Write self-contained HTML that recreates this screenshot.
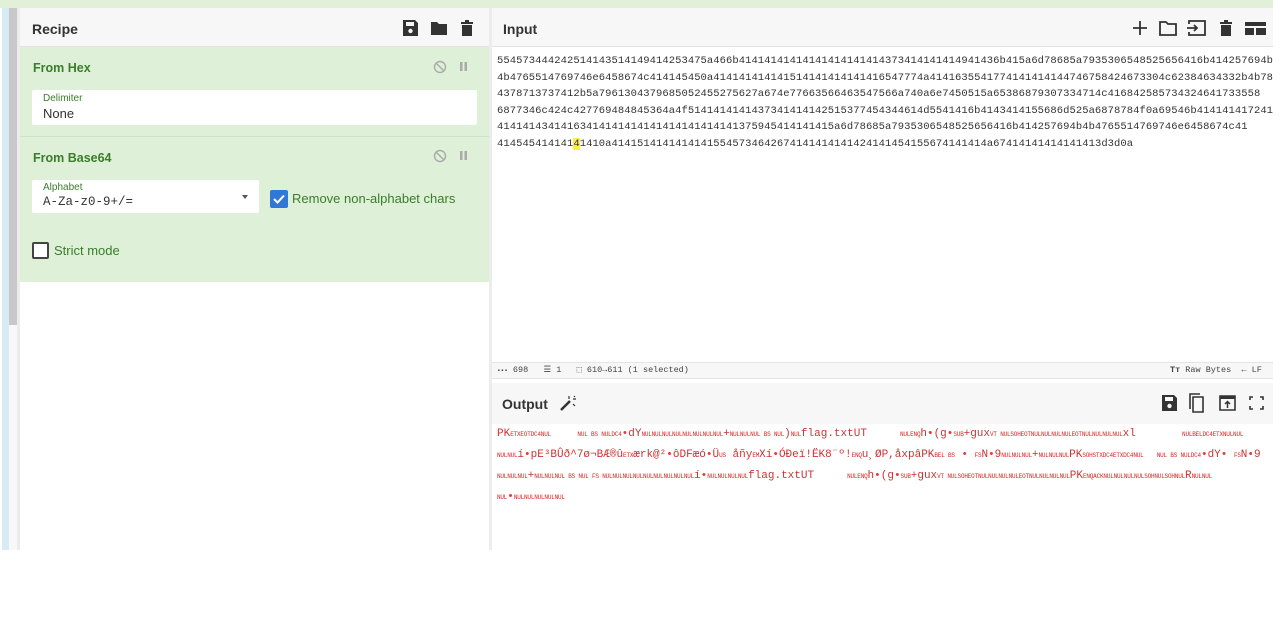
<!DOCTYPE html>
<html><head><meta charset="utf-8"><style>
*{box-sizing:border-box;margin:0;padding:0}
body{width:1280px;height:625px;background:#fff;font-family:"Liberation Sans",sans-serif;position:relative;overflow:hidden}
.abs{position:absolute}
.mono{font-family:"Liberation Mono",monospace}
.hdr{font-weight:bold;font-size:14px;color:#333}
.opt{color:#3a7d2a;font-weight:bold;font-size:12.5px}
.ctl{color:#e33;font-size:6px;font-weight:bold;letter-spacing:-0.2px}
.out{font-family:"Liberation Mono",monospace;font-size:11px;color:#c33;line-height:21px;white-space:nowrap}
.out b{font-weight:normal;color:#d22}
.dot{color:#e33}
</style></head><body>
<div class="abs" style="left:0;top:0;width:1273px;height:8px;background:#e2f0da"></div>
<div class="abs" style="left:2px;top:8px;width:7px;height:542px;background:#d7ebf5"></div>
<div class="abs" style="left:9px;top:8px;width:8px;height:542px;background:#f8f8f8"></div>
<div class="abs" style="left:9px;top:8px;width:8px;height:317px;background:#c8c8c8"></div>
<div class="abs" style="left:17px;top:8px;width:3px;height:542px;background:#ececec"></div>

<div class="abs" style="left:20px;top:8px;width:469px;height:542px;background:#fff"></div>
<div class="abs" style="left:20px;top:8px;width:469px;height:39px;background:#f7f7f7;border-bottom:1px solid #e2e2e2"></div>
<div class="abs hdr" style="left:32px;top:21px">Recipe</div>
<svg class="abs" style="left:402px;top:19px" width="76" height="18" viewBox="0 0 76 18" fill="#333">
<path d="M1 1h12l3 3v13H1z M4 3v4h8V3z" fill-rule="evenodd"/><circle cx="8.5" cy="12" r="2.2" fill="#f7f7f7"/>
<path d="M29 3h6l2 2h8v11H29z"/>
<path d="M59 3h12v2H59z M63 1h4v2h-4z M60 6h10v11H60z"/>
</svg>
<div class="abs" style="left:20px;top:47px;width:469px;height:90px;background:#dff0d8;border-bottom:1px solid #cfe3c6"></div>
<div class="abs opt" style="left:33px;top:61px">From Hex</div>
<svg class="abs" style="left:433px;top:60px" width="40" height="14"><circle cx="7" cy="7" r="5.5" fill="none" stroke="#aaa" stroke-width="1.4"/><path d="M3 3l8 8" stroke="#aaa" stroke-width="1.4"/><rect x="27" y="2" width="2.5" height="9" fill="#aaa"/><rect x="31.5" y="2" width="2.5" height="9" fill="#aaa"/></svg>
<div class="abs" style="left:32px;top:90px;width:445px;height:35px;background:#fff;border-radius:2px"></div>
<div class="abs" style="left:43px;top:93px;font-size:10px;color:#3a7d2a">Delimiter</div>
<div class="abs" style="left:43px;top:106px;font-size:13px;color:#333">None</div>
<div class="abs" style="left:20px;top:137px;width:469px;height:145px;background:#dff0d8"></div>
<div class="abs opt" style="left:33px;top:151px">From Base64</div>
<svg class="abs" style="left:433px;top:149px" width="40" height="14"><circle cx="7" cy="7" r="5.5" fill="none" stroke="#aaa" stroke-width="1.4"/><path d="M3 3l8 8" stroke="#aaa" stroke-width="1.4"/><rect x="27" y="2" width="2.5" height="9" fill="#aaa"/><rect x="31.5" y="2" width="2.5" height="9" fill="#aaa"/></svg>
<div class="abs" style="left:32px;top:180px;width:227px;height:33px;background:#fff;border-radius:2px"></div>
<div class="abs" style="left:43px;top:182px;font-size:10px;color:#3a7d2a">Alphabet</div>
<div class="abs mono" style="left:43px;top:195px;font-size:12.5px;color:#333">A-Za-z0-9+/=</div>
<div class="abs" style="left:242px;top:195px;border-left:3.5px solid transparent;border-right:3.5px solid transparent;border-top:4px solid #555"></div>
<div class="abs" style="left:270px;top:190px;width:18px;height:18px;background:#2f78d6;border-radius:2px"></div>
<svg class="abs" style="left:270px;top:190px" width="18" height="18"><path d="M4 9l3.5 3.5L14 5.5" fill="none" stroke="#fff" stroke-width="2"/></svg>
<div class="abs" style="left:292px;top:191px;font-size:13px;color:#3a7d2a">Remove non-alphabet chars</div>
<div class="abs" style="left:32px;top:242px;width:17px;height:17px;border:2px solid #444;border-radius:2px;background:#fff"></div>
<div class="abs" style="left:54px;top:243px;font-size:13px;color:#3a7d2a">Strict mode</div>

<div class="abs" style="left:489px;top:8px;width:3px;height:542px;background:#ececec"></div>

<div class="abs" style="left:492px;top:8px;width:781px;height:39px;background:#f7f7f7;border-bottom:1px solid #e2e2e2"></div>
<div class="abs hdr" style="left:503px;top:21px">Input</div>
<svg class="abs" style="left:1132px;top:19px" width="136" height="18" viewBox="0 0 136 18" fill="#333">
<path d="M8 2v14M1 9h14" stroke="#333" stroke-width="1.8"/>
<path d="M28 3h6l2 2h8v11H28z" fill="none" stroke="#333" stroke-width="1.8"/>
<path d="M57 5V2h16v14H57v-3" fill="none" stroke="#333" stroke-width="1.8"/><path d="M55 9h10M62 6l3 3-3 3" fill="none" stroke="#333" stroke-width="1.8"/>
<path d="M88 3h12v2H88z M92 1h4v2h-4z M89 6h10v11H89z"/>
<path d="M113 3h21v4h-21z M113 9h9v7h-9z M124 9h10v7h-10z"/>
</svg>
<div class="abs mono" style="left:497px;top:53px;font-size:10.5px;color:#333;line-height:16.5px;letter-spacing:0.06px;white-space:pre">554573444242514143514149414253475a466b41414141414141414141414373414141414941436b415a6d78685a7935306548525656416b414257694b
4b4765514769746e6458674c414145450a414141414141514141414141416547774a4141635541774141414144746758424673304c62384634332b4b78
4378713737412b5a7961304379685052455275627a674e77663566463547566a740a6e7450515a65386879307334714c416842585734324641733558
6877346c424c427769484845364a4f5141414141437341414142515377454344614d5541416b4143414155686d525a6878784f0a69546b414141417241
41414143414163414141414141414141414141375945414141415a6d78685a7935306548525656416b414257694b4b4765514769746e6458674c41
414545414141<span style="background:#ffee44">4</span>1410a41415141414141415545734642674141414141424141454155674141414a67414141414141413d3d0a</div>

<div class="abs" style="left:492px;top:362px;width:781px;height:17px;background:#f7f7f7;border-top:1px solid #e5e5e5;border-bottom:1px solid #e5e5e5"></div>
<div class="abs mono" style="left:497px;top:365px;font-size:8.5px;color:#444;white-space:pre"><b style="font-size:6px">▪▪▪</b> 698   ☰ 1   ⬚ 610→611 (1 selected)</div>
<div class="abs mono" style="left:1170px;top:365px;font-size:8.5px;color:#444;white-space:pre"><b>Tт</b> Raw Bytes  ← LF</div>

<div class="abs" style="left:492px;top:383px;width:781px;height:41px;background:#f7f7f7"></div>
<div class="abs hdr" style="left:502px;top:396px">Output</div>
<svg class="abs" style="left:559px;top:395px" width="18" height="17"><path d="M2 15L11 6" stroke="#333" stroke-width="2.5"/><path d="M10 1v3M14 4h3M14 9l2 2M15 1l1 1" stroke="#333" stroke-width="1.2"/></svg>
<svg class="abs" style="left:1160px;top:393px" width="106" height="20" viewBox="0 0 106 20" fill="#333">
<path d="M2 2h12l3 3v13H2z M5 4v4h8V4z" fill-rule="evenodd"/><circle cx="9.5" cy="13" r="2.2" fill="#f7f7f7"/>
<path d="M33 4h10v15H33z" fill="none" stroke="#333" stroke-width="1.6"/><path d="M30 16V1h10" fill="none" stroke="#333" stroke-width="1.6"/>
<path d="M60 3h15v14H60z" fill="none" stroke="#333" stroke-width="1.6"/><path d="M60 3h15v3H60z"/><path d="M67.5 15V9M65 11l2.5-2.5L70 11" fill="none" stroke="#333" stroke-width="1.5"/>
<path d="M90 7V4h3M100 4h3v3M103 13v3h-3M93 16h-3v-3" fill="none" stroke="#333" stroke-width="1.6"/>
</svg>
<div class="abs out" style="left:497px;top:424px">PK<b class="ctl">ETXEOTDC4NUL</b>&nbsp;&nbsp;&nbsp;&nbsp;<b class="ctl">NUL BS NULDC4</b><span class="dot">•</span>dY<b class="ctl">NULNULNULNULNULNULNULNUL</b>+<b class="ctl">NULNULNUL BS NUL</b>)<b class="ctl">NUL</b>flag.txtUT&nbsp;&nbsp;&nbsp;&nbsp;&nbsp;<b class="ctl">NULENQ</b>h<span class="dot">•</span>(g<span class="dot">•</span><b class="ctl">SUB</b>+gux<b class="ctl">VT NULSOHEOTNULNULNULNULEOTNULNULNULNUL</b>xl&nbsp;&nbsp;&nbsp;&nbsp;&nbsp;&nbsp;&nbsp;<b class="ctl">NULBELDC4ETXNULNUL</b><br>
<b class="ctl">NULNUL</b>í<span class="dot">•</span>pE³BÛð^7ø¬BÆ®û<b class="ctl">ETX</b>ærk@²<span class="dot">•</span>ôDFæó<span class="dot">•</span>Ü<b class="ctl">US</b> åñy<b class="ctl">EM</b>Xí<span class="dot">•</span>ÓÐeï!ËK8¨º!<b class="ctl">ENQ</b>u¸ØP,åxpâPK<b class="ctl">BEL BS</b> <span class="dot">•</span> <b class="ctl">FS</b>N<span class="dot">•</span>9<b class="ctl">NULNULNUL</b>+<b class="ctl">NULNULNUL</b>PK<b class="ctl">SOHSTXDC4ETXDC4NUL</b>&nbsp;&nbsp;<b class="ctl">NUL BS NULDC4</b><span class="dot">•</span>dY<span class="dot">•</span> <b class="ctl">FS</b>N<span class="dot">•</span>9<br>
<b class="ctl">NULNULNUL</b>+<b class="ctl">NULNULNUL BS NUL FS NULNULNULNULNULNULNULNULNUL</b>í<span class="dot">•</span><b class="ctl">NULNULNULNUL</b>flag.txtUT&nbsp;&nbsp;&nbsp;&nbsp;&nbsp;<b class="ctl">NULENQ</b>h<span class="dot">•</span>(g<span class="dot">•</span><b class="ctl">SUB</b>+gux<b class="ctl">VT NULSOHEOTNULNULNULNULEOTNULNULNULNUL</b>PK<b class="ctl">ENQACKNULNULNULNULSOHNULSOHNUL</b>R<b class="ctl">NULNUL</b><br>
<b class="ctl">NUL</b><span class="dot">•</span><b class="ctl">NULNULNULNULNUL</b></div>
</body></html>
